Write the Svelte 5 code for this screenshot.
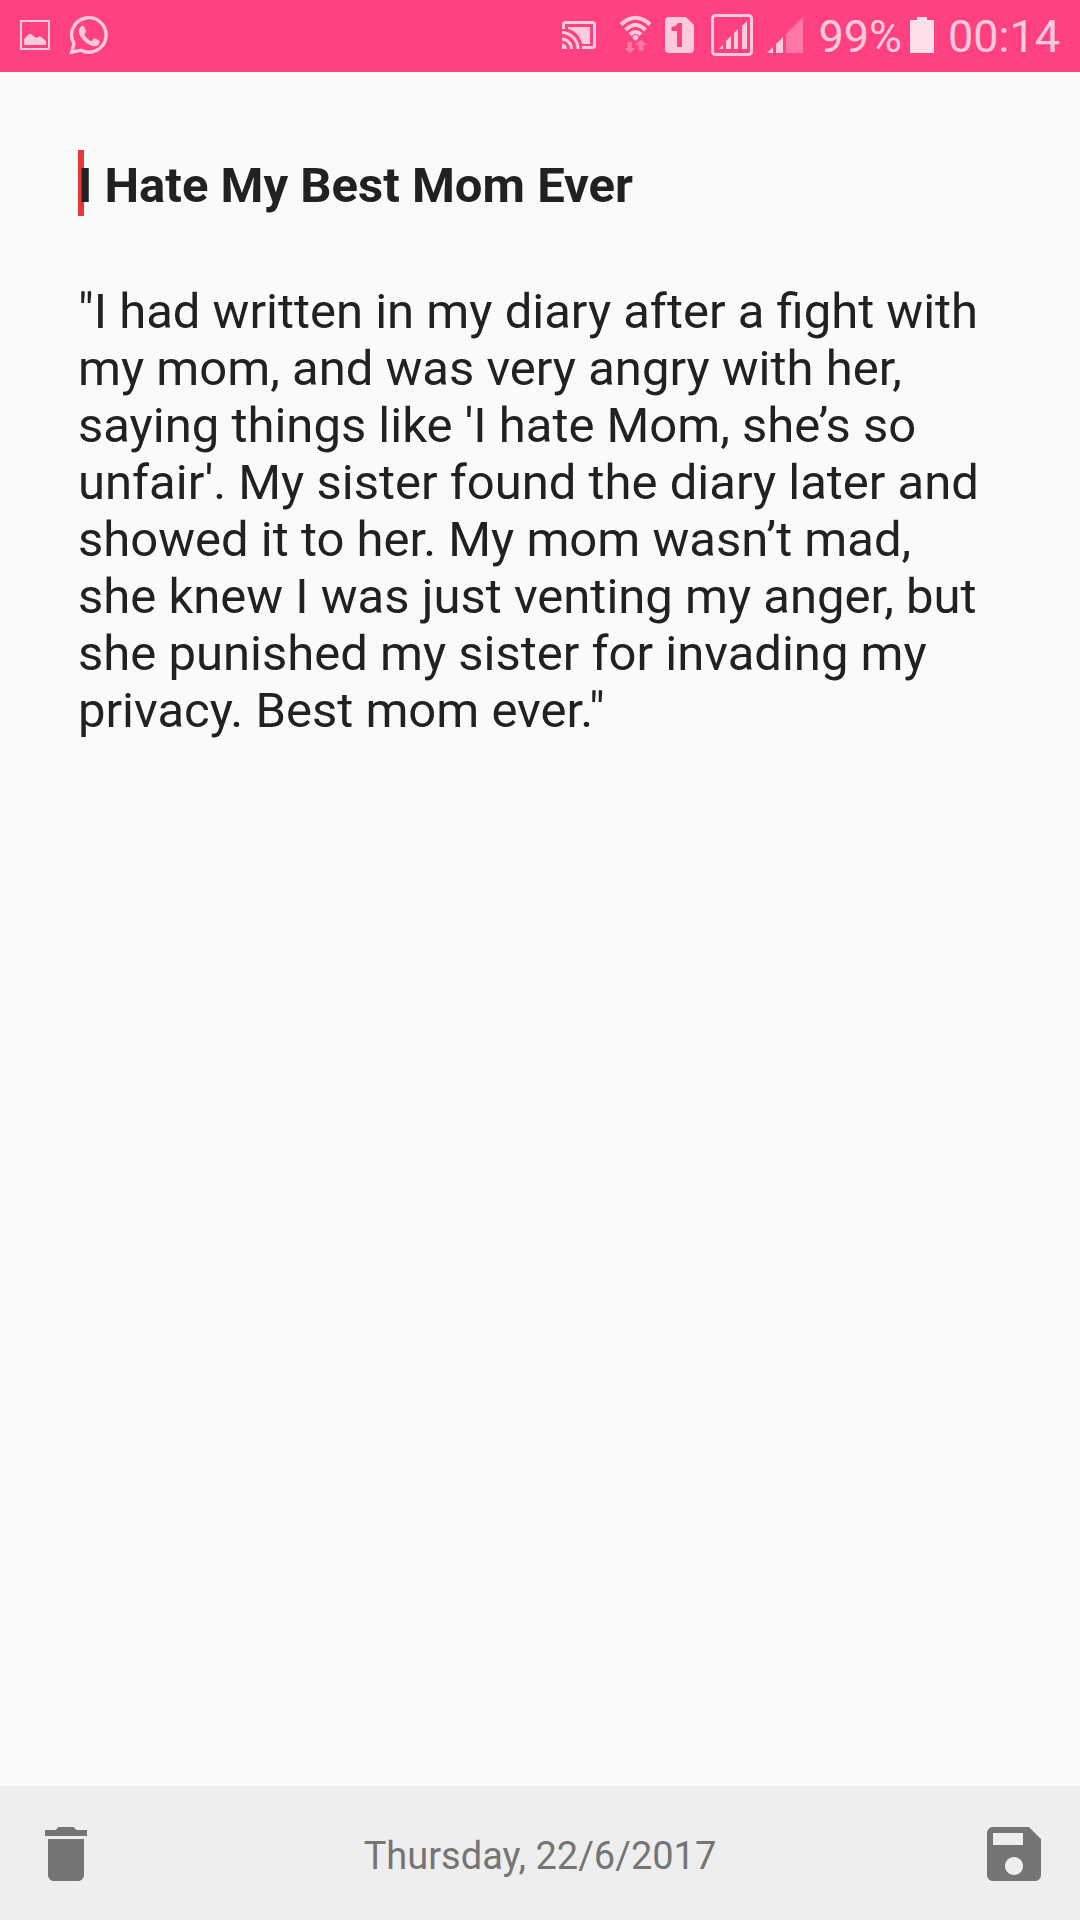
<script>
	let title = $state('I Hate My Best Mom Ever');
	let entry = $state(
		`"I had written in my diary after a fight with my mom, and was very angry with her, saying things like 'I hate Mom, she’s so unfair'. My sister found the diary later and showed it to her. My mom wasn’t mad, she knew I was just venting my anger, but she punished my sister for invading my privacy. Best mom ever."`
	);
	let battery = '99%';
	let time = '00:14';
	let date = 'Thursday, 22/6/2017';
</script>

<div class="screen">
	<header class="status-bar">
		<div class="notifications">
			<svg width="30" height="44" viewBox="0 0 30 44" aria-hidden="true">
				<rect x="1" y="7" width="28" height="28" fill="none" stroke="currentColor" stroke-width="2" />
				<path d="M4 31V25l5-5 2 0 5 4 4-2 6 5v4z" fill="currentColor" />
			</svg>
			<svg width="40" height="44" viewBox="0 0 40 44" aria-hidden="true">
				<path
					d="M2.7 38.2 5 29.6A17.2 17.2 0 1 1 12 36.2z"
					fill="none"
					stroke="currentColor"
					stroke-width="3.4"
				/>
				<path
					d="M12 12.6q2-1.6 3.2.2l1.8 4q.4 1-.6 2.2l-1.2 1.4q2.6 4.8 7.4 6.8l1.8-2.2q.8-.9 1.8-.4l3.8 2q1 .6.4 2.4-1.4 3.4-5 3.2C18 31.4 10 22.800 9.8 17.4q-.1-2.8 2.2-4.8z"
					fill="currentColor"
				/>
			</svg>
		</div>

		<div class="indicators">
			<svg width="44" height="44" viewBox="0 0 44 44" aria-hidden="true">
				<g fill="none" stroke="currentColor" stroke-width="3">
					<path d="M1.5 15V10.5q0-2 2-2h27q2 0 2 2v21q0 2-2 2H20" />
					<path d="M0 18.5A16.500 16.500 0 0 1 16 35M0 25A10 10 0 0 1 9.500 35" />
				</g>
				<path d="M6 13h22v17H20C18 22 13 16.500 6 15z" fill="currentColor" />
				<path d="M0 29.5A5.500 5.500 0 0 1 5 35H0z" fill="currentColor" />
			</svg>
			<svg width="31" height="44" viewBox="0 0 31 44" aria-hidden="true">
				<g fill="none" stroke="currentColor" stroke-width="4">
					<path d="M1 10.5Q15.5-3 30 10.500" />
					<path d="M5.500 16Q15.500 6 25.500 16" />
					<path d="M10 20.500Q15.500 15.500 21 20.500" />
				</g>
				<path d="M12.500 24a3 3 0 0 1 6 0L15.500 27z" fill="currentColor" />
				<g class="faint" fill="currentColor">
					<path d="M7.500 28h4.500v6h3.500L10 39.500 4.500 34h3z" />
					<path d="M18.500 36.500h5v-5.500H27l-6-5.500-6 5.500h3.500z" />
				</g>
			</svg>
			<svg width="30" height="44" viewBox="0 0 30 44" aria-hidden="true">
				<path
					fill="currentColor"
					fill-rule="evenodd"
					d="M4 3h17l8 8v24q0 4-4 4H4q-4 0-4-4V7q0-4 4-4zM13 9q-2 3.500-6.500 4v4H12v16h5V9z"
				/>
			</svg>
			<svg width="44" height="44" viewBox="0 0 44 44" aria-hidden="true">
				<rect x="3.500" y="1.500" width="39" height="39" rx="3" fill="none" stroke="currentColor" stroke-width="3" />
				<path d="M10 35l4-4v4zM17 35V27l5-5v13zM25 35V19l4-4v20zM33 35V12l5-5v28z" fill="currentColor" />
			</svg>
			<svg width="37" height="44" viewBox="0 0 37 44" aria-hidden="true">
				<path d="M0 39l6-6v6zM9 39V30l7-7v16z" fill="currentColor" />
				<path class="faint" d="M19 39V20L36 3v36z" fill="currentColor" />
			</svg>
			<span class="level">{battery}</span>
			<svg class="battery" width="24" height="44" viewBox="0 0 24 44" aria-hidden="true">
				<path d="M7 3h10v3h7v33H0V6h7z" fill="currentColor" />
			</svg>
			<time>{time}</time>
		</div>
	</header>

	<main class="editor">
		<div class="title-field">
			<span class="caret"></span>
			<input type="text" aria-label="Title" bind:value={title} />
		</div>
		<textarea aria-label="Diary entry" spellcheck="false" bind:value={entry}></textarea>
	</main>

	<footer class="toolbar">
		<button type="button" aria-label="Delete">
			<svg viewBox="0 0 24 24" aria-hidden="true">
				<path d="M6 19c0 1.100.9 2 2 2h8c1.100 0 2-.9 2-2V7H6v12zM19 4h-3.500l-1-1h-5l-1 1H5v2h14V4z" />
			</svg>
		</button>
		<span class="date">{date}</span>
		<button type="button" aria-label="Save">
			<svg viewBox="0 0 24 24" aria-hidden="true">
				<path
					d="M17 3H5c-1.110 0-2 .9-2 2v14c0 1.100.89 2 2 2h14c1.100 0 2-.9 2-2V7l-4-4zm-5 16c-1.660 0-3-1.340-3-3s1.340-3 3-3 3 1.340 3 3-1.340 3-3 3zm3-10H5V5h10v4z"
				/>
			</svg>
		</button>
	</footer>
</div>

<style>
	:global(body) {
		margin: 0;
		background: #fafafa;
	}

	.screen {
		display: flex;
		flex-direction: column;
		min-height: 100vh;
		background: #fafafa;
		color: #212121;
		font-family: Roboto, 'Noto Sans', sans-serif;
	}

	.status-bar {
		display: flex;
		align-items: center;
		justify-content: space-between;
		box-sizing: border-box;
		height: 72px;
		padding: 0 20px;
		background: #ff4081;
		color: #ffcade;
		font-size: 45px;
		line-height: 52px;
	}

	.notifications,
	.indicators {
		display: flex;
		align-items: center;
	}

	.notifications {
		gap: 19px;
	}

	.indicators {
		gap: 14px;
	}

	.level,
	time {
		padding-top: 2px;
	}

	.faint {
		opacity: 0.4;
	}

	.level {
		margin-right: -6px;
	}

	.battery {
		color: #ffe0ea;
	}

	.editor {
		display: flex;
		flex: 1;
		flex-direction: column;
		gap: 63px;
		padding: 78px 90px 60px 78px;
	}

	.title-field {
		position: relative;
		display: flex;
	}

	.caret {
		position: absolute;
		top: 0;
		left: 0;
		width: 6px;
		height: 66px;
		background: #e53935;
	}

	input,
	textarea {
		position: relative;
		width: 100%;
		margin: 0;
		padding: 0;
		border: 0;
		outline: 0;
		background: transparent;
		color: inherit;
		font-family: inherit;
		font-size: 49px;
		line-height: 57px;
	}

	input {
		height: 70px;
		font-weight: 700;
	}

	textarea {
		flex: 1;
		resize: none;
		overflow: hidden;
	}

	.toolbar {
		display: flex;
		align-items: center;
		justify-content: space-between;
		padding: 32px 30px 30px;
		background: #eeeeee;
		color: #757575;
	}

	.toolbar button {
		display: flex;
		padding: 0;
		border: 0;
		background: none;
		color: inherit;
		cursor: pointer;
	}

	.toolbar svg {
		width: 72px;
		height: 72px;
		fill: currentColor;
	}

	.date {
		padding-top: 4px;
		font-size: 38px;
		line-height: 44px;
	}
</style>
